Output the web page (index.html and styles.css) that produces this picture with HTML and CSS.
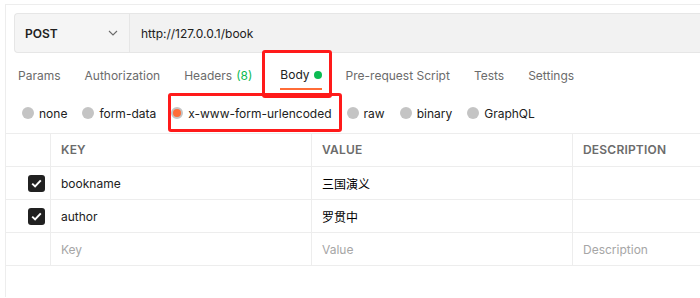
FILE: index.html
```html
<!DOCTYPE html>
<html lang="en">
<head>
    <meta charset="UTF-8">
    <title>Request - Body</title>
    <link rel="stylesheet" href="styles.css">
</head>
<body>
    <div class="panel">
        <div class="url-bar">
            <div class="method">
                <span class="method-name">POST</span>
                <svg class="chevron" width="10" height="6" viewBox="0 0 10 6"><path d="M1 1l4 4 4-4" fill="none" stroke="#6b6b6b" stroke-width="1.1"/></svg>
            </div>
            <div class="url">http://127.0.0.1/book</div>
        </div>

        <nav class="tabs">
            <span class="tab">Params</span>
            <span class="tab">Authorization</span>
            <span class="tab">Headers <span class="count">(8)</span></span>
            <span class="tab active"><span class="tab-label">Body <i class="dot"></i></span></span>
            <span class="tab">Pre-request Script</span>
            <span class="tab">Tests</span>
            <span class="tab">Settings</span>
        </nav>

        <div class="body-types">
            <label class="radio"><i class="circle"></i>none</label>
            <label class="radio"><i class="circle"></i>form-data</label>
            <label class="radio selected"><i class="circle"></i>x-www-form-urlencoded</label>
            <label class="radio"><i class="circle"></i>raw</label>
            <label class="radio"><i class="circle"></i>binary</label>
            <label class="radio"><i class="circle"></i>GraphQL</label>
        </div>

        <div class="params">
            <div class="row head">
                <div class="cell check"></div>
                <div class="cell">KEY</div>
                <div class="cell">VALUE</div>
                <div class="cell">DESCRIPTION</div>
            </div>
            <div class="row">
                <div class="cell check"><span class="box"><svg width="11" height="9" viewBox="0 0 11 9"><path d="M1.2 4.6l2.9 2.8 5.7-6" fill="none" stroke="#fff" stroke-width="2"/></svg></span></div>
                <div class="cell">bookname</div>
                <div class="cell cjk">三国演义</div>
                <div class="cell"></div>
            </div>
            <div class="row">
                <div class="cell check"><span class="box"><svg width="11" height="9" viewBox="0 0 11 9"><path d="M1.2 4.6l2.9 2.8 5.7-6" fill="none" stroke="#fff" stroke-width="2"/></svg></span></div>
                <div class="cell">author</div>
                <div class="cell cjk">罗贯中</div>
                <div class="cell"></div>
            </div>
            <div class="row">
                <div class="cell check"></div>
                <div class="cell placeholder">Key</div>
                <div class="cell placeholder">Value</div>
                <div class="cell placeholder">Description</div>
            </div>
        </div>

        <!-- annotation boxes from the screenshot -->
        <div class="mark mark-tab"></div>
        <div class="mark mark-radio"></div>
    </div>
</body>
</html>
```

FILE: styles.css
```css
body, html {
    margin: 0;
    padding: 0;
    background-color: #fff;
    font-family: Inter, "Noto Sans", sans-serif;
    font-size: 12px;
    color: #212121;
}
.panel {
    position: relative;
    margin: 4px 0 0 5px;
    height: 293px;
    border-top: 1px solid #ededed;
    border-left: 1px solid #ededed;
    box-sizing: border-box;
    overflow: hidden;
}
.url-bar {
    display: flex;
    height: 40px;
    margin: 8px 0 0 8px;
    border: 1px solid #e6e6e6;
    border-right: none;
    border-radius: 4px 0 0 4px;
    background-color: #f2f2f2;
    box-sizing: border-box;
}
.method {
    display: flex;
    align-items: center;
    justify-content: space-between;
    width: 115px;
    padding: 0 10px 0 10px;
    box-sizing: border-box;
    border-right: 1px solid #e6e6e6;
    background-color: #f5f5f5;
    border-radius: 4px 0 0 4px;
}
.method-name {
    font-weight: 600;
    font-size: 12px;
    color: #212121;
}
.chevron {
    margin-right: 1px;
}
.url {
    display: flex;
    align-items: center;
    padding-left: 11px;
    color: #212121;
}
.tabs {
    display: flex;
    margin-top: 6px;
    height: 31px;
}
.tab {
    display: flex;
    align-items: center;
    padding: 2px 12px 0;
    color: #6b6b6b;
    white-space: nowrap;
}
.count {
    color: #0cbb52;
    margin-left: 4px;
}
.tab.active {
    color: #212121;
    padding: 0 12px 0 16px;
}
.tab-label {
    display: flex;
    align-items: center;
    height: 100%;
    box-sizing: border-box;
    border-bottom: 2px solid #ff6c37;
    padding-top: 2px;
}
.dot {
    display: inline-block;
    width: 8px;
    height: 8px;
    border-radius: 50%;
    background-color: #0cbb52;
    margin-left: 4px;
}
.body-types {
    display: flex;
    align-items: center;
    height: 43px;
    padding: 3px 0 0 16px;
    box-sizing: border-box;
}
.radio {
    display: flex;
    align-items: center;
    margin-right: 15px;
    color: #212121;
}
.circle {
    display: inline-block;
    width: 12px;
    height: 12px;
    border-radius: 50%;
    background-color: #c4c4c4;
    margin-right: 5px;
    box-sizing: border-box;
}
.radio.selected .circle {
    border: 2px solid #c4c4c4;
    background-color: #ff6c37;
}
.params {
    border-top: 1px solid #ededed;
}
.row {
    display: grid;
    grid-template-columns: 44px 261px 261px 1fr;
    height: 33px;
    border-bottom: 1px solid #ededed;
    box-sizing: border-box;
}
.cell {
    display: flex;
    align-items: center;
    padding-left: 10px;
    border-left: 1px solid #ededed;
    white-space: nowrap;
}
.cell.check {
    border-left: none;
    justify-content: flex-end;
    padding: 0 5px 0 0;
}
.head .cell {
    font-weight: 600;
    font-size: 12px;
    color: #6b6b6b;
    letter-spacing: 0.2px;
    padding-bottom: 2px;
}
.cjk {
    font-family: "Noto Sans CJK SC", sans-serif;
    font-size: 12px;
    color: #000;
}
.placeholder {
    color: #a6a6a6;
}
.box {
    display: flex;
    align-items: center;
    justify-content: center;
    width: 17px;
    height: 17px;
    border-radius: 3px;
    background-color: #212121;
}
.mark {
    position: absolute;
    border: 3px solid #ff1a1a;
    border-radius: 3px;
    box-sizing: border-box;
}
.mark-tab {
    left: 256px;
    top: 45px;
    width: 70px;
    height: 48px;
}
.mark-radio {
    left: 162px;
    top: 88px;
    width: 174px;
    height: 39px;
}
```
